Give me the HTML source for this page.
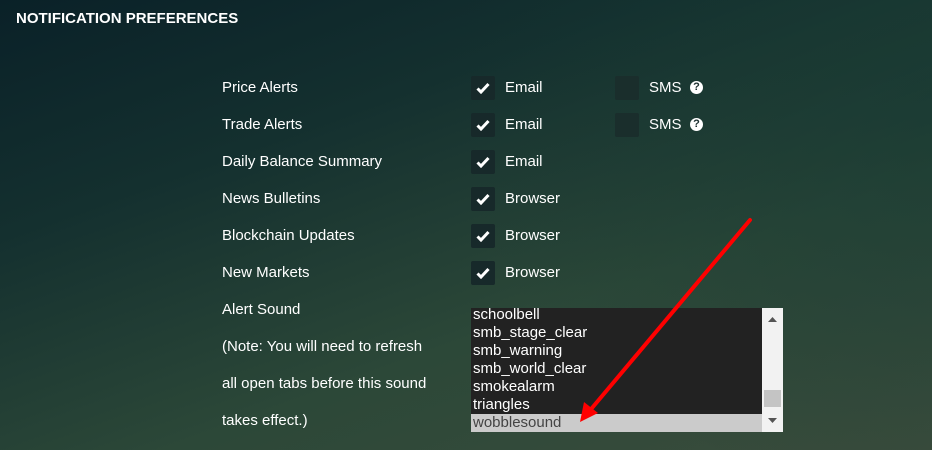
<!DOCTYPE html>
<html><head><style>
body{margin:0;width:932px;height:450px;overflow:hidden;font-family:"Liberation Sans",sans-serif;color:#fff;
background:linear-gradient(160deg,#0a2128 0%,#14302f 30%,#2c4838 65%,#3a4c3c 100%);position:relative}
.bg2{position:absolute;inset:0;background:radial-gradient(ellipse 500px 400px at 950px 100px,rgba(20,55,50,.6),transparent)}
h1{position:absolute;left:16px;top:10px;margin:0;font-size:15px;font-weight:bold}
.t{position:absolute;font-size:15px;line-height:18px;margin-top:1px}
.cb{position:absolute;width:24px;height:24px;background:#17292a;border-radius:2px}
.cb svg{position:absolute;left:5px;top:6px}
.q{position:absolute;width:13px;height:13px;border-radius:50%;background:#fff;color:#1a2e2e;font-size:11px;font-weight:bold;text-align:center;line-height:13px;margin-top:1px}
.lb{position:absolute;left:471px;top:308px;width:291px;height:124px;background:#222;overflow:hidden}
.lb div{height:18px;line-height:18px;font-size:15px;padding-left:2px}
.sb{position:absolute;left:762px;top:308px;width:21px;height:124px;background:#f2f2f2}
</style></head><body><div class="bg2"></div>
<h1>NOTIFICATION PREFERENCES</h1>
<div class="t" style="left:222px;top:78px">Price Alerts</div>
<div class="t" style="left:222px;top:115px">Trade Alerts</div>
<div class="t" style="left:222px;top:152px">Daily Balance Summary</div>
<div class="t" style="left:222px;top:189px">News Bulletins</div>
<div class="t" style="left:222px;top:226px">Blockchain Updates</div>
<div class="t" style="left:222px;top:263px">New Markets</div>
<div class="t" style="left:222px;top:300px">Alert Sound</div>
<div class="t" style="left:222px;top:337px">(Note: You will need to refresh</div>
<div class="t" style="left:222px;top:374px">all open tabs before this sound</div>
<div class="t" style="left:222px;top:411px">takes effect.)</div>

<div class="cb" style="left:471px;top:76px"><svg width="14" height="12" viewBox="0 0 14 12"><path d="M1.5 6.5l3.5 3.5 7.5-8" stroke="#fff" stroke-width="3" fill="none"/></svg></div>
<div class="cb" style="left:471px;top:113px"><svg width="14" height="12" viewBox="0 0 14 12"><path d="M1.5 6.5l3.5 3.5 7.5-8" stroke="#fff" stroke-width="3" fill="none"/></svg></div>
<div class="cb" style="left:471px;top:150px"><svg width="14" height="12" viewBox="0 0 14 12"><path d="M1.5 6.5l3.5 3.5 7.5-8" stroke="#fff" stroke-width="3" fill="none"/></svg></div>
<div class="cb" style="left:471px;top:187px"><svg width="14" height="12" viewBox="0 0 14 12"><path d="M1.5 6.5l3.5 3.5 7.5-8" stroke="#fff" stroke-width="3" fill="none"/></svg></div>
<div class="cb" style="left:471px;top:224px"><svg width="14" height="12" viewBox="0 0 14 12"><path d="M1.5 6.5l3.5 3.5 7.5-8" stroke="#fff" stroke-width="3" fill="none"/></svg></div>
<div class="cb" style="left:471px;top:261px"><svg width="14" height="12" viewBox="0 0 14 12"><path d="M1.5 6.5l3.5 3.5 7.5-8" stroke="#fff" stroke-width="3" fill="none"/></svg></div>
<div class="t" style="left:505px;top:78px">Email</div>
<div class="t" style="left:505px;top:115px">Email</div>
<div class="t" style="left:505px;top:152px">Email</div>
<div class="t" style="left:505px;top:189px">Browser</div>
<div class="t" style="left:505px;top:226px">Browser</div>
<div class="t" style="left:505px;top:263px">Browser</div>

<div class="cb" style="left:615px;top:76px;background:#1a2e2c"></div>
<div class="cb" style="left:615px;top:113px;background:#1a2e2c"></div>
<div class="t" style="left:649px;top:78px">SMS</div>
<div class="t" style="left:649px;top:115px">SMS</div>
<div class="q" style="left:690px;top:80px">?</div>
<div class="q" style="left:690px;top:117px">?</div>

<div class="lb">
<div style="margin-top:-2px">schoolbell</div><div>smb_stage_clear</div><div>smb_warning</div><div>smb_world_clear</div><div>smokealarm</div><div>triangles</div><div style="background:#cbcbcb;color:#444">wobblesound</div>
</div>
<div class="sb">
<svg width="21" height="124" style="position:absolute;left:0;top:0"><path d="M6 14h9l-4.5-5z" fill="#555"/><rect x="2" y="82" width="17" height="17" fill="#c4c4c4"/><path d="M6 110h9l-4.5 5z" fill="#555"/></svg>
</div>
<svg width="932" height="450" style="position:absolute;left:0;top:0"><line x1="750" y1="220" x2="592" y2="408" stroke="#f00" stroke-width="4" stroke-linecap="round"/><path d="M580 422l4-20 14 11z" fill="#f00"/></svg>
</body></html>
